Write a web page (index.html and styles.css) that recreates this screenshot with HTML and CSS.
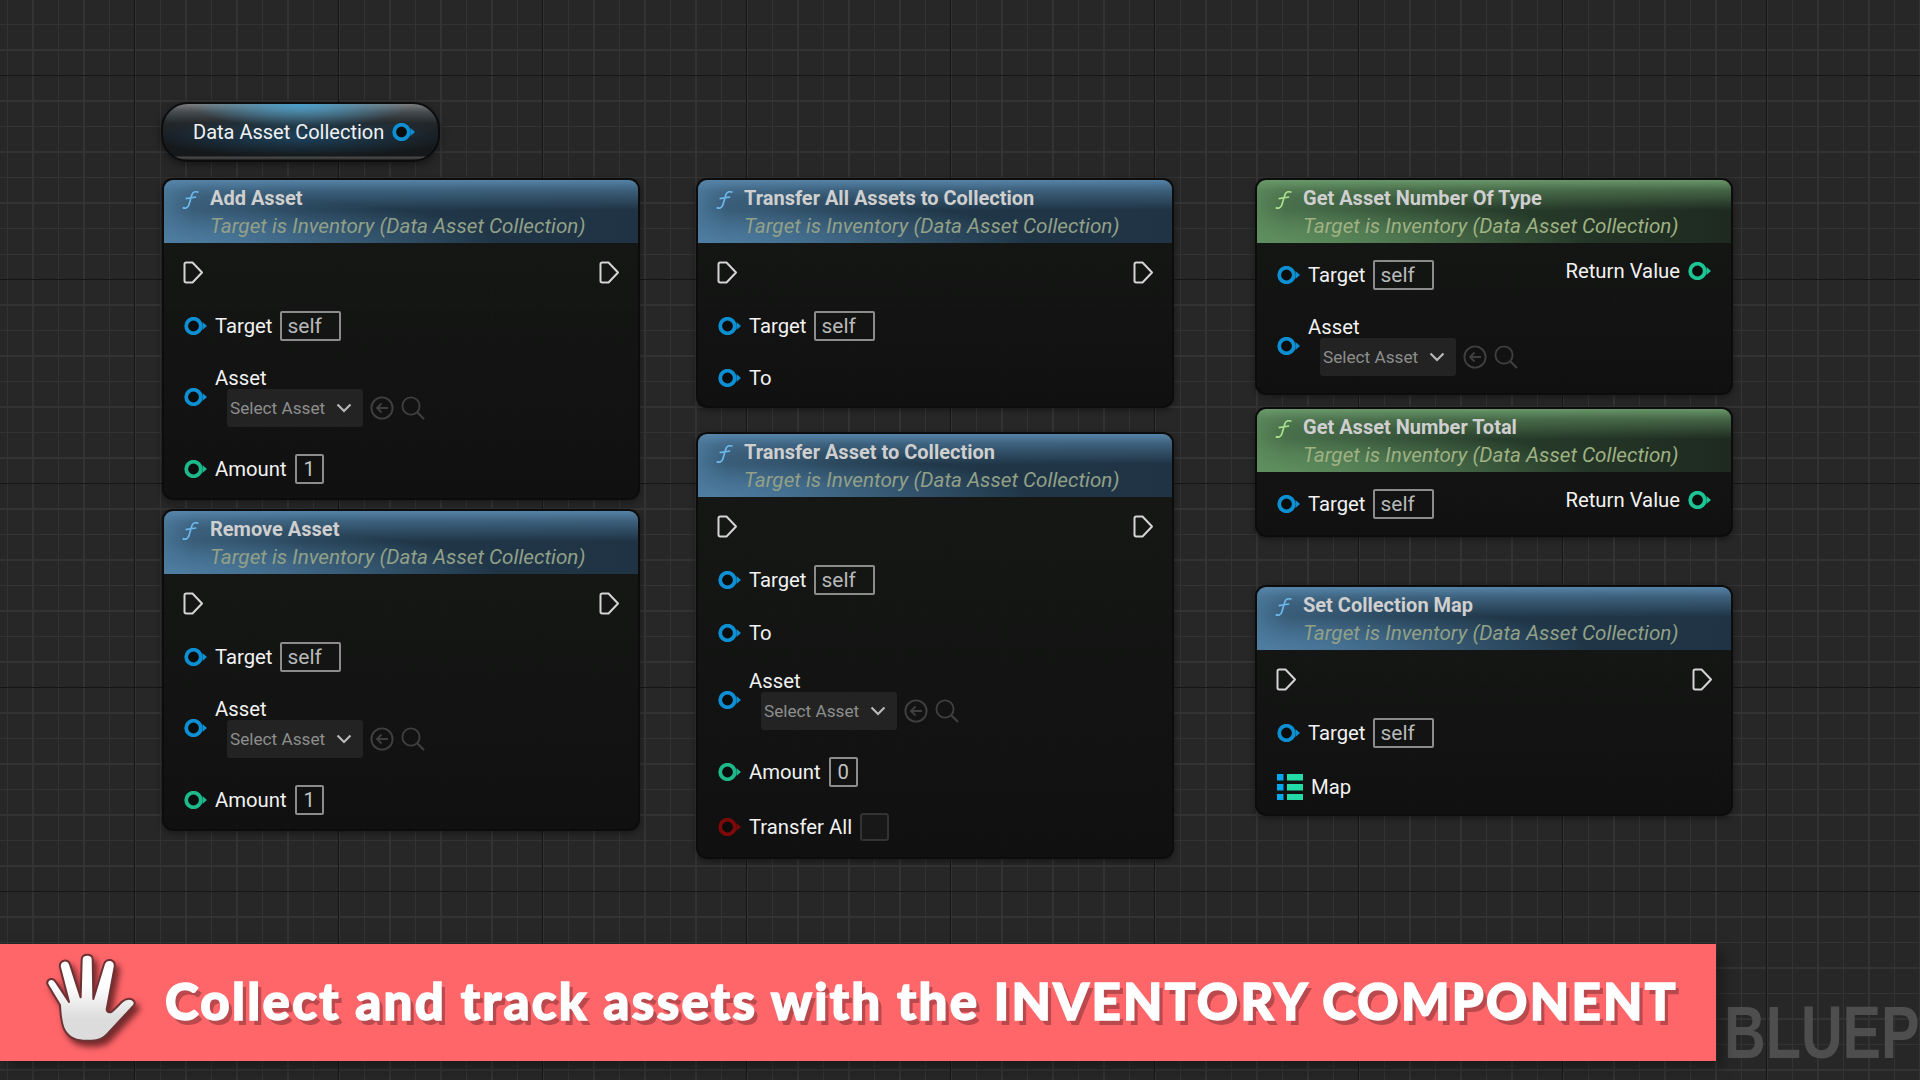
FILE: index.html
```html
<!DOCTYPE html>
<html lang="en">

<head>
  <meta charset="UTF-8">
  <title>Inventory component blueprint nodes</title>
  <link rel="stylesheet" href="styles.css">
</head>

<body>
  <svg class="defs" width="0" height="0">
    <symbol id="pin" viewBox="0 0 23 18">
      <circle cx="9.5" cy="9" r="7.3" fill="#0b0c0c" stroke="currentColor" stroke-width="3.8" />
      <path d="M18.5 5 L23 9 L18.5 13 Z" fill="currentColor" />
    </symbol>
    <symbol id="exec" viewBox="0 0 21 23">
      <path d="M3.2 1.5 H9.5 L19 11.5 L9.5 21.5 H3.2 Q1.5 21.5 1.5 19.8 V3.2 Q1.5 1.5 3.2 1.5 Z" fill="none"
        stroke="#d4d4d4" stroke-width="2" stroke-linejoin="round" />
    </symbol>
    <symbol id="fn" viewBox="0 0 18 18">
      <path d="M16.5 1.3 C13.4 .2 10.8 .6 9.8 4 L6.8 14 C5.9 17 3.2 17.7 .7 16.6 M3.6 7.7 L14.2 6" fill="none"
        stroke="currentColor" stroke-width="1.7" />
    </symbol>
    <symbol id="chevron" viewBox="0 0 16 10">
      <path d="M1.5 1.5 L8 8 L14.5 1.5" fill="none" stroke="#b8b8b8" stroke-width="2.2" />
    </symbol>
    <symbol id="back" viewBox="0 0 24 24">
      <circle cx="12" cy="12" r="10.6" fill="none" stroke="#3f3f3f" stroke-width="1.9" />
      <path d="M18 12 H7 M11.5 7.5 L7 12 L11.5 16.5" fill="none" stroke="#3f3f3f" stroke-width="1.9" />
    </symbol>
    <symbol id="search" viewBox="0 0 24 24">
      <circle cx="10" cy="10" r="8.6" fill="none" stroke="#3f3f3f" stroke-width="1.9" />
      <path d="M16 16 L23 23" fill="none" stroke="#3f3f3f" stroke-width="2.2" />
    </symbol>
    <symbol id="map" viewBox="0 0 26 26">
      <rect x="0" y="0" width="6.5" height="6.5" fill="#00a8f0" />
      <rect x="0" y="10" width="6.5" height="6.5" fill="#00a8f0" />
      <rect x="0" y="20" width="6.5" height="6.5" fill="#00a8f0" />
      <rect x="10" y="0" width="16" height="6.5" fill="#22dba6" />
      <rect x="10" y="10" width="16" height="6.5" fill="#22dba6" />
      <rect x="10" y="20" width="16" height="6.5" fill="#22dba6" />
    </symbol>
  </svg>

  <main class="canvas">
    <div class="pill">
      <span>Data Asset Collection</span>
      <svg class="pin blue"><use href="#pin" /></svg>
    </div>

    <!-- first column -->
    <section class="node n-add">
      <header class="head"><svg class="fn"><use href="#fn" /></svg><b>Add Asset</b><em>Target is Inventory (Data Asset Collection)</em></header>
      <div class="body">
        <div class="row exec"><svg class="execpin"><use href="#exec" /></svg><svg class="execpin"><use href="#exec" /></svg></div>
        <div class="row gap24"><svg class="pin blue"><use href="#pin" /></svg><span>Target</span><span class="field self">self</span></div>
        <div class="row asset gap27"><svg class="pin blue"><use href="#pin" /></svg>
          <div class="stack"><span class="stack-label">Asset</span>
            <div class="picker"><span class="select">Select Asset<svg class="chev"><use href="#chevron" /></svg></span><svg class="tool"><use href="#back" /></svg><svg class="tool"><use href="#search" /></svg></div>
          </div>
        </div>
        <div class="row gap26"><svg class="pin green"><use href="#pin" /></svg><span>Amount</span><span class="field num">1</span></div>
      </div>
    </section>

    <section class="node n-remove">
      <header class="head"><svg class="fn"><use href="#fn" /></svg><b>Remove Asset</b><em>Target is Inventory (Data Asset Collection)</em></header>
      <div class="body">
        <div class="row exec"><svg class="execpin"><use href="#exec" /></svg><svg class="execpin"><use href="#exec" /></svg></div>
        <div class="row gap24"><svg class="pin blue"><use href="#pin" /></svg><span>Target</span><span class="field self">self</span></div>
        <div class="row asset gap27"><svg class="pin blue"><use href="#pin" /></svg>
          <div class="stack"><span class="stack-label">Asset</span>
            <div class="picker"><span class="select">Select Asset<svg class="chev"><use href="#chevron" /></svg></span><svg class="tool"><use href="#back" /></svg><svg class="tool"><use href="#search" /></svg></div>
          </div>
        </div>
        <div class="row gap26"><svg class="pin green"><use href="#pin" /></svg><span>Amount</span><span class="field num">1</span></div>
      </div>
    </section>

    <!-- second column -->
    <section class="node n-all">
      <header class="head"><svg class="fn"><use href="#fn" /></svg><b>Transfer All Assets to Collection</b><em>Target is Inventory (Data Asset Collection)</em></header>
      <div class="body end13">
        <div class="row exec"><svg class="execpin"><use href="#exec" /></svg><svg class="execpin"><use href="#exec" /></svg></div>
        <div class="row gap24"><svg class="pin blue"><use href="#pin" /></svg><span>Target</span><span class="field self">self</span></div>
        <div class="row gap22"><svg class="pin blue"><use href="#pin" /></svg><span>To</span></div>
      </div>
    </section>

    <section class="node n-transfer">
      <header class="head"><svg class="fn"><use href="#fn" /></svg><b>Transfer Asset to Collection</b><em>Target is Inventory (Data Asset Collection)</em></header>
      <div class="body end15">
        <div class="row exec"><svg class="execpin"><use href="#exec" /></svg><svg class="execpin"><use href="#exec" /></svg></div>
        <div class="row gap24"><svg class="pin blue"><use href="#pin" /></svg><span>Target</span><span class="field self">self</span></div>
        <div class="row gap23"><svg class="pin blue"><use href="#pin" /></svg><span>To</span></div>
        <div class="row asset gap23"><svg class="pin blue"><use href="#pin" /></svg>
          <div class="stack"><span class="stack-label">Asset</span>
            <div class="picker"><span class="select">Select Asset<svg class="chev"><use href="#chevron" /></svg></span><svg class="tool"><use href="#back" /></svg><svg class="tool"><use href="#search" /></svg></div>
          </div>
        </div>
        <div class="row gap26"><svg class="pin green"><use href="#pin" /></svg><span>Amount</span><span class="field num">0</span></div>
        <div class="row gap25"><svg class="pin red"><use href="#pin" /></svg><span>Transfer All</span><span class="field check"></span></div>
      </div>
    </section>

    <!-- third column -->
    <section class="node pure n-type">
      <header class="head"><svg class="fn"><use href="#fn" /></svg><b>Get Asset Number Of Type</b><em>Target is Inventory (Data Asset Collection)</em></header>
      <div class="body first17 end16">
        <div class="row split">
          <div class="row"><svg class="pin blue"><use href="#pin" /></svg><span>Target</span><span class="field self">self</span></div>
          <div class="row output"><span>Return Value</span><svg class="pin teal"><use href="#pin" /></svg></div>
        </div>
        <div class="row asset gap27"><svg class="pin blue"><use href="#pin" /></svg>
          <div class="stack"><span class="stack-label">Asset</span>
            <div class="picker"><span class="select">Select Asset<svg class="chev"><use href="#chevron" /></svg></span><svg class="tool"><use href="#back" /></svg><svg class="tool"><use href="#search" /></svg></div>
          </div>
        </div>
      </div>
    </section>

    <section class="node pure n-total">
      <header class="head"><svg class="fn"><use href="#fn" /></svg><b>Get Asset Number Total</b><em>Target is Inventory (Data Asset Collection)</em></header>
      <div class="body first17 end16">
        <div class="row split">
          <div class="row"><svg class="pin blue"><use href="#pin" /></svg><span>Target</span><span class="field self">self</span></div>
          <div class="row output"><span>Return Value</span><svg class="pin teal"><use href="#pin" /></svg></div>
        </div>
      </div>
    </section>

    <section class="node n-map">
      <header class="head"><svg class="fn"><use href="#fn" /></svg><b>Set Collection Map</b><em>Target is Inventory (Data Asset Collection)</em></header>
      <div class="body end12">
        <div class="row exec"><svg class="execpin"><use href="#exec" /></svg><svg class="execpin"><use href="#exec" /></svg></div>
        <div class="row gap24"><svg class="pin blue"><use href="#pin" /></svg><span>Target</span><span class="field self">self</span></div>
        <div class="row gap24"><svg class="mapicon"><use href="#map" /></svg><span>Map</span></div>
      </div>
    </section>

    <div class="watermark">BLUEP</div>

    <div class="banner">
      <svg class="hand" viewBox="0 0 390 360">
        <defs>
          <linearGradient id="palm" x1="0" y1="0" x2="0" y2="1">
            <stop offset="0.35" stop-color="#ffffff" />
            <stop offset="0.75" stop-color="#dcdcdc" />
          </linearGradient>
        </defs>
        <path
          d="M52 132 Q50 120 62 117 Q72 115 79 128 L117 186 L90 82 Q87 66 102 62 Q117 60 121 76 L152 172 L155 58 Q156 44 172 44 Q188 44 188 58 L190 177 L222 72 Q227 58 242 60 Q256 64 254 80 L230 208 Q230 220 244 216 Q250 212 275 186 Q290 172 306 178 Q320 186 310 198 L232 282 Q215 302 185 302 L160 302 Q115 300 100 262 Q92 240 90 195 Z"
          fill="url(#palm)" stroke="#6e3234" stroke-width="6" stroke-linejoin="round" />
      </svg>
      <span class="slogan">Collect and track assets with the INVENTORY COMPONENT</span>
    </div>
  </main>
</body>

</html>
```

FILE: styles.css
```css
* {
  box-sizing: border-box;
}

html,
body {
  margin: 0;
  height: 100%;
}

body {
  overflow: hidden;
  background: #272727;
  color: #f2f2f2;
  font: 20.3px/1.2 Roboto, sans-serif;
}

.defs {
  position: absolute;
}

/* grid: heavy lines every 204px, light ones every 25.5px */
.canvas {
  position: relative;
  width: 1920px;
  height: 1080px;
  overflow: hidden;
  background-image:
    repeating-linear-gradient(90deg, transparent 0 134px, #161616 134px 135.2px, transparent 135.2px 204px),
    repeating-linear-gradient(180deg, transparent 0 75px, #161616 75px 76.2px, transparent 76.2px 204px),
    repeating-linear-gradient(90deg, transparent 0 6.8px, #333 6.8px 8.2px, transparent 8.2px 25.5px),
    repeating-linear-gradient(180deg, transparent 0 24px, #333 24px 25.4px, transparent 25.4px 25.5px);
}

.pill {
  position: absolute;
  left: 161px;
  top: 102px;
  width: 279px;
  height: 60px;
  display: flex;
  align-items: center;
  gap: 8px;
  padding: 0 0 1px 30px;
  border: 2px solid #0c0c0c;
  border-radius: 27px;
  font-size: 20px;
  box-shadow: 0 3px 8px rgba(0, 0, 0, .45);
  background:
    radial-gradient(ellipse 40% 42% at 50% 0, #4a9fcb, rgba(74, 159, 203, 0)),
    radial-gradient(ellipse 55% 36% at 50% 58%, rgba(30, 80, 115, .75), transparent),
    linear-gradient(180deg, #7c7c7c 0, #474c50 14%, #23282b 34%, #181b1d 60%, #15181a 92%, #4c4c4c 96%, #1a1a1a 100%);
}

.node {
  position: absolute;
  width: 478px;
  border: 2px solid #0c0c0c;
  border-radius: 11px;
  background: linear-gradient(180deg, rgba(21, 23, 21, .94), rgba(14, 15, 14, .95));
  box-shadow: 0 2px 6px rgba(0, 0, 0, .4);
}

.n-add { left: 162px; top: 178px; }
.n-remove { left: 162px; top: 509px; }
.n-all { left: 696px; top: 178px; }
.n-transfer { left: 696px; top: 432px; }
.n-type { left: 1255px; top: 178px; }
.n-total { left: 1255px; top: 407px; }
.n-map { left: 1255px; top: 585px; }

.head {
  display: grid;
  grid-template-columns: 31px 1fr;
  grid-template-rows: 28px 28px;
  height: 63px;
  padding: 5px 0 0 15px;
  border-radius: 9px 9px 0 0;
  background:
    linear-gradient(180deg, rgba(88, 135, 172, .95) 0, rgba(80, 125, 160, .6) 16%, transparent 48%),
    radial-gradient(ellipse 70% 75% at 0 100%, #4e7ea2 0, rgba(76, 122, 157, .7) 40%, transparent 100%),
    linear-gradient(90deg, #44708f 0, #2f4e66 6%, #21394b 30%, #1f3344 100%);
}

.pure .head {
  background:
    linear-gradient(180deg, rgba(108, 155, 108, .95) 0, rgba(95, 140, 95, .6) 16%, transparent 48%),
    radial-gradient(ellipse 70% 75% at 0 100%, #5f8f5f 0, rgba(95, 143, 95, .7) 40%, transparent 100%),
    linear-gradient(90deg, #547f54 0, #3d5f40 6%, #2c4530 30%, #1e2a20 100%);
}

.fn {
  grid-row: 1 / 3;
  width: 18px;
  height: 18px;
  margin: 6px 0 0 3px;
  color: #6cb8ec;
}

.pure .fn {
  color: #a8e08c;
}

.head b {
  font-size: 20px;
  line-height: 27px;
  color: #cfcfcf;
  white-space: nowrap;
}

.head em {
  font-size: 20.7px;
  line-height: 27px;
  color: #92a088;
  white-space: nowrap;
}

.pure .head em {
  color: #9fb183;
}

.body {
  padding: 14px 20px 14px 20px;
}

.first17 {
  padding-top: 17px;
}

.end12 { padding-bottom: 12px; }
.end13 { padding-bottom: 13px; }
.end15 { padding-bottom: 15px; }
.end16 { padding-bottom: 16px; }

.row {
  display: flex;
  align-items: center;
  gap: 8px;
  min-height: 30px;
}

.gap22 { margin-top: 22px; }
.gap23 { margin-top: 23px; }
.gap24 { margin-top: 24px; }
.gap25 { margin-top: 25px; }
.gap26 { margin-top: 26px; }
.gap27 { margin-top: 27px; }

.exec,
.split {
  justify-content: space-between;
}

.exec {
  margin: 0 -2px 0 -1px;
}

.split {
  align-items: flex-start;
}

.output {
  margin-top: -4px;
}

.pin {
  flex: none;
  width: 23px;
  height: 18px;
}

.asset .pin {
  margin-bottom: 3px;
}

.blue { color: #0d8fd4; }
.green { color: #1eb98a; }
.teal { color: #1cc596; }
.red { color: #7d0a0a; }

.execpin {
  width: 21px;
  height: 23px;
}

.mapicon {
  flex: none;
  width: 26px;
  height: 26px;
}

.field {
  display: block;
  height: 30px;
  border: 2px solid #8c8c8c;
  border-radius: 2px;
  color: #b8b8b8;
  line-height: 26px;
}

.self {
  width: 61px;
  padding-left: 5px;
  font-size: 21px;
}

.num {
  width: 29px;
  text-align: center;
  color: #c4c4c4;
}

.check {
  width: 29px;
  height: 28px;
  border-color: #333;
  border-radius: 3px;
  background: #171817;
}

.stack {
  padding-bottom: 1px;
}

.stack-label {
  display: block;
  height: 21px;
  line-height: 20px;
}

.picker {
  display: flex;
  align-items: center;
  gap: 7px;
  margin-left: 12px;
}

.select {
  display: flex;
  align-items: center;
  justify-content: space-between;
  width: 136px;
  height: 38px;
  padding: 0 11px 0 3px;
  border-radius: 3px;
  background: #222322;
  color: #8e8e8e;
  font-size: 17.2px;
}

.chev {
  width: 16px;
  height: 10px;
}

.tool {
  width: 24px;
  height: 24px;
}

.banner {
  position: absolute;
  left: 0;
  top: 944px;
  width: 1716px;
  height: 117px;
  display: flex;
  align-items: center;
  padding-bottom: 4px;
  background: #ff666a;
  box-shadow: 6px 6px 14px rgba(0, 0, 0, .35);
}

.hand {
  position: absolute;
  left: 30px;
  top: -4px;
  width: 130px;
  height: 120px;
  filter: drop-shadow(4px 5px 3px rgba(70, 20, 20, .75));
}

.slogan {
  margin-left: 165px;
  font: 900 51px/1 Lato, sans-serif;
  color: #fff;
  letter-spacing: 2.3px;
  white-space: nowrap;
  -webkit-text-stroke: 1.5px #fff;
  text-shadow: 4px 5px 0 rgba(130, 50, 55, .55);
}

.watermark {
  position: absolute;
  left: 1724px;
  top: 996px;
  font: 700 74px/1 "Liberation Sans", sans-serif;
  color: #4e4e4e;
  white-space: nowrap;
  transform: scaleX(.78);
  transform-origin: left center;
}
```
